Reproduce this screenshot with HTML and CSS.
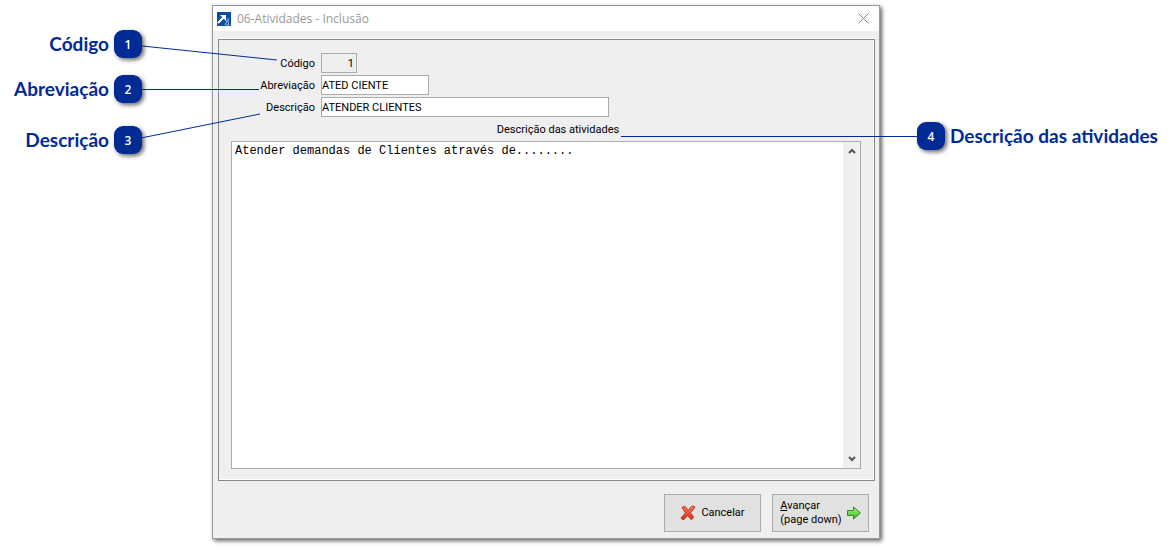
FILE: index.html
```
<!DOCTYPE html>
<html lang="pt-BR">
	<head>
		<meta charset="UTF-8" />
		<meta name="viewport" content="width=device-width, initial-scale=1.0" />
		<title>06-Atividades - Inclusão</title>
		<link rel="stylesheet" href="styles.css">
	</head>
	<body>
		<main class="stage">
			<div class="callouts callouts-left">
				<div class="callout"><span>Código</span><b class="badge">1</b></div>
				<div class="callout"><span>Abreviação</span><b class="badge">2</b></div>
				<div class="callout callout-last"><span>Descrição</span><b class="badge">3</b></div>
			</div>

			<form class="window">
				<header class="titlebar">
					<svg class="app-icon" viewBox="0 0 14 14">
						<rect width="14" height="14" fill="#0c4da2" />
						<path d="M1 11 L7 5" fill="none" stroke="#fff" stroke-width="2" />
						<path d="M3 3 H9 V9 Z" fill="#fff" />
						<path d="M11 6 V9 M9 9 H12 M10 9 L8 13 M11 10 L12 13 H9" fill="none" stroke="#9cc0e6" />
					</svg>
					<h1>06-Atividades - Inclusão</h1>
					<button type="button" class="close" aria-label="Fechar">
						<svg viewBox="0 0 11 11"><path d="M.5 .5 L10.5 10.5 M10.5 .5 L.5 10.5" stroke="#888" /></svg>
					</button>
				</header>

				<section class="panel">
					<div class="field">
						<label for="codigo">Código</label>
						<input type="text" id="codigo" class="code" value="1" readonly />
					</div>
					<div class="field">
						<label for="abreviacao">Abreviação</label>
						<input type="text" id="abreviacao" class="short" value="ATED CIENTE" />
					</div>
					<div class="field">
						<label for="descricao">Descrição</label>
						<input type="text" id="descricao" class="long" value="ATENDER CLIENTES" />
					</div>
					<label class="area-label" for="atividades">Descrição das atividades</label>
					<div class="area">
						<textarea id="atividades">Atender demandas de Clientes através de........</textarea>
						<div class="scrollbar">
							<svg viewBox="0 0 8 6"><path d="M1 5 L4 2 L7 5" /></svg>
							<svg viewBox="0 0 8 6"><path d="M1 1 L4 4 L7 1" /></svg>
						</div>
					</div>
				</section>

				<footer class="actions">
					<button type="button">
						<svg class="icon-cancel" viewBox="0 0 16 16">
							<defs>
								<linearGradient id="red" x2="0" y2="1">
									<stop offset="0" stop-color="#ff7a58" />
									<stop offset="1" stop-color="#d92f16" />
								</linearGradient>
							</defs>
							<path d="M2 2.500 Q4 .5 5.500 2 L8 5.500 L11.500 1.500 Q13 .5 15 2 L10.500 8 L13.500 12 Q13 14 11 14.500 L7.500 10.500 L4 14.500 Q2 15 1 13 L5.500 8 Z" fill="url(#red)" stroke="#b93420" stroke-linejoin="round" />
						</svg>
						<span>Cancelar</span>
					</button>
					<button type="submit">
						<span><u>A</u>vançar<br />(page down)</span>
						<svg class="icon-next" viewBox="0 0 14 14">
							<defs>
								<linearGradient id="green" x2="0" y2="1">
									<stop offset="0" stop-color="#b4f58a" />
									<stop offset="1" stop-color="#35b51c" />
								</linearGradient>
							</defs>
							<path d="M.5 4.500 H6.500 V1 L13.500 7 L6.500 13 V9.500 H.5 Z" fill="url(#green)" stroke="#2f8a2a" stroke-linejoin="round" />
						</svg>
					</button>
				</footer>
			</form>

			<div class="callouts callouts-right">
				<div class="callout"><b class="badge">4</b><span>Descrição das atividades</span></div>
			</div>

			<!-- connector lines between badges and fields -->
			<svg class="lines lines-left" width="280" height="160">
				<path d="M142 46 L277 60 M142 89.500 H259 M141 138 L260 114" />
			</svg>
			<svg class="lines lines-right" width="300" height="160">
				<path d="M4 136.500 H301" />
			</svg>
		</main>
	</body>
</html>
```
FILE: styles.css
```
* {
	box-sizing: border-box;
}

body {
	margin: 0;
	background-color: #fff;
	color: #000;
	font-family: Roboto, sans-serif;
	font-size: 11px;
}

.stage {
	position: relative;
	display: grid;
	grid-template-columns: 212px 1fr 296px;
	min-height: 100vh;
	padding: 5px 0 10px;
}

.callouts {
	display: flex;
	flex-direction: column;
	color: #002b95;
	font-family: Lato, sans-serif;
	font-size: 19px;
	font-weight: bold;
}

.callouts-left {
	gap: 17px;
	padding: 25px 70px 0 0;
}

.callouts-right {
	padding: 117px 0 0 37px;
}

.callout {
	display: flex;
	align-items: center;
	justify-content: flex-end;
	gap: 5px;
	white-space: nowrap;
}

.callout span {
	padding-bottom: 2px;
}

.callouts-right .callout {
	justify-content: flex-start;
}

.callout-last {
	margin-top: 6px;
}

.badge {
	display: flex;
	align-items: center;
	justify-content: center;
	width: 28px;
	height: 28px;
	border-radius: 9px;
	background-color: #002b95;
	box-shadow: 2px 2px 4px rgba(0, 0, 0, 0.6);
	color: #fff;
	font-family: "Open Sans", sans-serif;
	font-size: 12px;
	font-weight: 600;
}

.window {
	display: flex;
	flex-direction: column;
	border: 1px solid #999;
	background-color: #efefef;
	box-shadow: 2px 2px 4px rgba(0, 0, 0, 0.6);
}

.titlebar {
	display: flex;
	align-items: center;
	gap: 6px;
	height: 25px;
	padding: 0 10px 0 4px;
	background-color: #fff;
}

.titlebar h1 {
	flex: 1;
	margin: 0;
	padding-bottom: 1px;
	color: #999;
	font-family: "Open Sans", sans-serif;
	font-size: 12px;
	font-weight: normal;
}

.app-icon {
	width: 14px;
	height: 14px;
}

.close {
	display: flex;
	padding: 0;
	border: 0;
	background: none;
}

.close svg {
	width: 11px;
	height: 11px;
}

.panel {
	display: flex;
	flex: 1;
	flex-direction: column;
	margin: 8px 4px 0 5px;
	padding: 13px 13px 11px 12px;
	border: 1px solid #888;
	box-shadow: 0 -1px #fff, inset -1px -1px #fff;
}

.field {
	display: flex;
	align-items: center;
	gap: 6px;
	height: 20px;
	margin-bottom: 2px;
}

.field label {
	width: 84px;
	text-align: right;
}

.field input {
	height: 20px;
	padding: 0;
	border: 1px solid #aaabb0;
	background-color: #fff;
	font: inherit;
}

.field .code {
	width: 36px;
	padding-right: 2px;
	background-color: #efefef;
	text-align: right;
}

.field .short {
	width: 108px;
}

.field .long {
	width: 288px;
}

.area-label {
	align-self: center;
	margin: 3px 0 3px 24px;
	line-height: 16px;
}

.area {
	display: flex;
	flex: 1;
	border: 1px solid #aaabb0;
	background-color: #fff;
}

.area textarea {
	flex: 1;
	padding: 2px 3px;
	border: 0;
	outline: 0;
	background: none;
	color: #000;
	font-family: "Liberation Mono", monospace;
	font-size: 12px;
	resize: none;
}

.scrollbar {
	display: flex;
	flex-direction: column;
	align-items: center;
	justify-content: space-between;
	width: 17px;
	padding: 6px 0;
	background-color: #efefef;
}

.scrollbar svg {
	width: 8px;
	height: 6px;
	fill: none;
	stroke: #555;
	stroke-width: 2;
}

.actions {
	display: flex;
	justify-content: flex-end;
	gap: 11px;
	padding: 13px 10px 6px;
}

.actions button {
	display: flex;
	align-items: center;
	justify-content: center;
	gap: 5px;
	width: 97px;
	height: 38px;
	padding: 0;
	border: 1px solid #aaabb0;
	background-color: #e1e1e1;
	color: #000;
	font: inherit;
	line-height: 14px;
	text-align: left;
}

.icon-cancel {
	width: 16px;
	height: 16px;
}

.icon-next {
	width: 14px;
	height: 14px;
}

.lines {
	position: absolute;
	top: 0;
	fill: none;
	stroke: #002b95;
	pointer-events: none;
}

.lines-left {
	left: 0;
}

.lines-right {
	right: 259px;
}
```
